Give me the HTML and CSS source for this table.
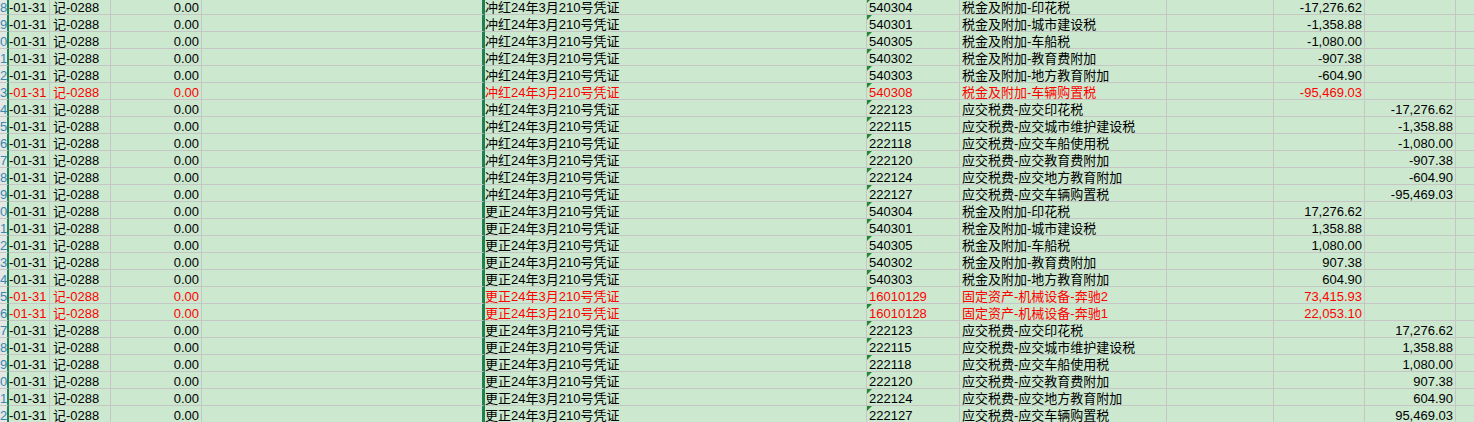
FILE: index.html
```html
<!DOCTYPE html>
<html lang="zh-CN">
<head>
<meta charset="utf-8">
<title>凭证明细</title>
<link rel="stylesheet" href="styles.css">
</head>
<body>
<div class="sheet">
  <div class="row"><div class="rh">8</div><div class="c a">-01-31</div><div class="c b">记-0288</div><div class="c n">0.00</div><div class="c d"></div><div class="c e">冲红24年3月210号凭证</div><div class="c f">540304</div><div class="c g">税金及附加-印花税</div><div class="c"></div><div class="c n">-17,276.62</div><div class="c n"></div><div class="c k"></div></div>
  <div class="row"><div class="rh">9</div><div class="c a">-01-31</div><div class="c b">记-0288</div><div class="c n">0.00</div><div class="c d"></div><div class="c e">冲红24年3月210号凭证</div><div class="c f">540301</div><div class="c g">税金及附加-城市建设税</div><div class="c"></div><div class="c n">-1,358.88</div><div class="c n"></div><div class="c k"></div></div>
  <div class="row"><div class="rh">0</div><div class="c a">-01-31</div><div class="c b">记-0288</div><div class="c n">0.00</div><div class="c d"></div><div class="c e">冲红24年3月210号凭证</div><div class="c f">540305</div><div class="c g">税金及附加-车船税</div><div class="c"></div><div class="c n">-1,080.00</div><div class="c n"></div><div class="c k"></div></div>
  <div class="row"><div class="rh">1</div><div class="c a">-01-31</div><div class="c b">记-0288</div><div class="c n">0.00</div><div class="c d"></div><div class="c e">冲红24年3月210号凭证</div><div class="c f">540302</div><div class="c g">税金及附加-教育费附加</div><div class="c"></div><div class="c n">-907.38</div><div class="c n"></div><div class="c k"></div></div>
  <div class="row"><div class="rh">2</div><div class="c a">-01-31</div><div class="c b">记-0288</div><div class="c n">0.00</div><div class="c d"></div><div class="c e">冲红24年3月210号凭证</div><div class="c f">540303</div><div class="c g">税金及附加-地方教育附加</div><div class="c"></div><div class="c n">-604.90</div><div class="c n"></div><div class="c k"></div></div>
  <div class="row red"><div class="rh">3</div><div class="c a">-01-31</div><div class="c b">记-0288</div><div class="c n">0.00</div><div class="c d"></div><div class="c e">冲红24年3月210号凭证</div><div class="c f">540308</div><div class="c g">税金及附加-车辆购置税</div><div class="c"></div><div class="c n">-95,469.03</div><div class="c n"></div><div class="c k"></div></div>
  <div class="row"><div class="rh">4</div><div class="c a">-01-31</div><div class="c b">记-0288</div><div class="c n">0.00</div><div class="c d"></div><div class="c e">冲红24年3月210号凭证</div><div class="c f">222123</div><div class="c g">应交税费-应交印花税</div><div class="c"></div><div class="c n"></div><div class="c n">-17,276.62</div><div class="c k"></div></div>
  <div class="row"><div class="rh">5</div><div class="c a">-01-31</div><div class="c b">记-0288</div><div class="c n">0.00</div><div class="c d"></div><div class="c e">冲红24年3月210号凭证</div><div class="c f">222115</div><div class="c g">应交税费-应交城市维护建设税</div><div class="c"></div><div class="c n"></div><div class="c n">-1,358.88</div><div class="c k"></div></div>
  <div class="row"><div class="rh">6</div><div class="c a">-01-31</div><div class="c b">记-0288</div><div class="c n">0.00</div><div class="c d"></div><div class="c e">冲红24年3月210号凭证</div><div class="c f">222118</div><div class="c g">应交税费-应交车船使用税</div><div class="c"></div><div class="c n"></div><div class="c n">-1,080.00</div><div class="c k"></div></div>
  <div class="row"><div class="rh">7</div><div class="c a">-01-31</div><div class="c b">记-0288</div><div class="c n">0.00</div><div class="c d"></div><div class="c e">冲红24年3月210号凭证</div><div class="c f">222120</div><div class="c g">应交税费-应交教育费附加</div><div class="c"></div><div class="c n"></div><div class="c n">-907.38</div><div class="c k"></div></div>
  <div class="row"><div class="rh">8</div><div class="c a">-01-31</div><div class="c b">记-0288</div><div class="c n">0.00</div><div class="c d"></div><div class="c e">冲红24年3月210号凭证</div><div class="c f">222124</div><div class="c g">应交税费-应交地方教育附加</div><div class="c"></div><div class="c n"></div><div class="c n">-604.90</div><div class="c k"></div></div>
  <div class="row"><div class="rh">9</div><div class="c a">-01-31</div><div class="c b">记-0288</div><div class="c n">0.00</div><div class="c d"></div><div class="c e">冲红24年3月210号凭证</div><div class="c f">222127</div><div class="c g">应交税费-应交车辆购置税</div><div class="c"></div><div class="c n"></div><div class="c n">-95,469.03</div><div class="c k"></div></div>
  <div class="row"><div class="rh">0</div><div class="c a">-01-31</div><div class="c b">记-0288</div><div class="c n">0.00</div><div class="c d"></div><div class="c e">更正24年3月210号凭证</div><div class="c f">540304</div><div class="c g">税金及附加-印花税</div><div class="c"></div><div class="c n">17,276.62</div><div class="c n"></div><div class="c k"></div></div>
  <div class="row"><div class="rh">1</div><div class="c a">-01-31</div><div class="c b">记-0288</div><div class="c n">0.00</div><div class="c d"></div><div class="c e">更正24年3月210号凭证</div><div class="c f">540301</div><div class="c g">税金及附加-城市建设税</div><div class="c"></div><div class="c n">1,358.88</div><div class="c n"></div><div class="c k"></div></div>
  <div class="row"><div class="rh">2</div><div class="c a">-01-31</div><div class="c b">记-0288</div><div class="c n">0.00</div><div class="c d"></div><div class="c e">更正24年3月210号凭证</div><div class="c f">540305</div><div class="c g">税金及附加-车船税</div><div class="c"></div><div class="c n">1,080.00</div><div class="c n"></div><div class="c k"></div></div>
  <div class="row"><div class="rh">3</div><div class="c a">-01-31</div><div class="c b">记-0288</div><div class="c n">0.00</div><div class="c d"></div><div class="c e">更正24年3月210号凭证</div><div class="c f">540302</div><div class="c g">税金及附加-教育费附加</div><div class="c"></div><div class="c n">907.38</div><div class="c n"></div><div class="c k"></div></div>
  <div class="row"><div class="rh">4</div><div class="c a">-01-31</div><div class="c b">记-0288</div><div class="c n">0.00</div><div class="c d"></div><div class="c e">更正24年3月210号凭证</div><div class="c f">540303</div><div class="c g">税金及附加-地方教育附加</div><div class="c"></div><div class="c n">604.90</div><div class="c n"></div><div class="c k"></div></div>
  <div class="row red"><div class="rh">5</div><div class="c a">-01-31</div><div class="c b">记-0288</div><div class="c n">0.00</div><div class="c d"></div><div class="c e">更正24年3月210号凭证</div><div class="c f">16010129</div><div class="c g">固定资产-机械设备-奔驰2</div><div class="c"></div><div class="c n">73,415.93</div><div class="c n"></div><div class="c k"></div></div>
  <div class="row red"><div class="rh">6</div><div class="c a">-01-31</div><div class="c b">记-0288</div><div class="c n">0.00</div><div class="c d"></div><div class="c e">更正24年3月210号凭证</div><div class="c f">16010128</div><div class="c g">固定资产-机械设备-奔驰1</div><div class="c"></div><div class="c n">22,053.10</div><div class="c n"></div><div class="c k"></div></div>
  <div class="row"><div class="rh">7</div><div class="c a">-01-31</div><div class="c b">记-0288</div><div class="c n">0.00</div><div class="c d"></div><div class="c e">更正24年3月210号凭证</div><div class="c f">222123</div><div class="c g">应交税费-应交印花税</div><div class="c"></div><div class="c n"></div><div class="c n">17,276.62</div><div class="c k"></div></div>
  <div class="row"><div class="rh">8</div><div class="c a">-01-31</div><div class="c b">记-0288</div><div class="c n">0.00</div><div class="c d"></div><div class="c e">更正24年3月210号凭证</div><div class="c f">222115</div><div class="c g">应交税费-应交城市维护建设税</div><div class="c"></div><div class="c n"></div><div class="c n">1,358.88</div><div class="c k"></div></div>
  <div class="row"><div class="rh">9</div><div class="c a">-01-31</div><div class="c b">记-0288</div><div class="c n">0.00</div><div class="c d"></div><div class="c e">更正24年3月210号凭证</div><div class="c f">222118</div><div class="c g">应交税费-应交车船使用税</div><div class="c"></div><div class="c n"></div><div class="c n">1,080.00</div><div class="c k"></div></div>
  <div class="row"><div class="rh">0</div><div class="c a">-01-31</div><div class="c b">记-0288</div><div class="c n">0.00</div><div class="c d"></div><div class="c e">更正24年3月210号凭证</div><div class="c f">222120</div><div class="c g">应交税费-应交教育费附加</div><div class="c"></div><div class="c n"></div><div class="c n">907.38</div><div class="c k"></div></div>
  <div class="row"><div class="rh">1</div><div class="c a">-01-31</div><div class="c b">记-0288</div><div class="c n">0.00</div><div class="c d"></div><div class="c e">更正24年3月210号凭证</div><div class="c f">222124</div><div class="c g">应交税费-应交地方教育附加</div><div class="c"></div><div class="c n"></div><div class="c n">604.90</div><div class="c k"></div></div>
  <div class="row"><div class="rh">2</div><div class="c a">-01-31</div><div class="c b">记-0288</div><div class="c n">0.00</div><div class="c d"></div><div class="c e">更正24年3月210号凭证</div><div class="c f">222127</div><div class="c g">应交税费-应交车辆购置税</div><div class="c"></div><div class="c n"></div><div class="c n">95,469.03</div><div class="c k"></div></div>
</div>
</body>
</html>
```

FILE: styles.css
```css
html, body {
  margin: 0;
  padding: 0;
  background: #cce8cf;
  overflow: hidden;
}

.sheet {
  margin-top: -2px;
  font-family: "Liberation Sans", "Noto Sans CJK SC", sans-serif;
  font-size: 13px;
  color: #000;
}

.row {
  display: grid;
  grid-template-columns: 9px 41px 61px 91px 283px 382px 93px 207px 107px 91px 91px 1fr;
  height: 17px;
}

.row.red .c {
  color: #ff0000;
}

.rh,
.c {
  box-sizing: border-box;
  height: 17px;
  border-bottom: 1px solid #c6c6c6;
  border-right: 1px solid #c6c6c6;
  padding: 2px 2px 0 2px;
  line-height: 15px;
  white-space: nowrap;
  overflow: hidden;
}

.rh {
  background: #e3e8e5;
  color: #3a86b0;
  text-align: right;
  padding: 2px 1px 0 0;
  border-right: 2px solid #1f8055;
}

.c.a {
  padding-left: 0;
}

.c.b {
  padding-left: 3px;
}

.c.d {
  border-right: 3px solid #1f8055;
}

.c.e {
  padding-left: 0;
}

.c.f {
  position: relative;
}

.c.f::before {
  content: "";
  position: absolute;
  left: 0;
  top: 0;
  border-top: 5px solid #1e8a2e;
  border-right: 5px solid transparent;
}

.c.n {
  text-align: right;
}

.c.k {
  border-right: 0;
}
```
